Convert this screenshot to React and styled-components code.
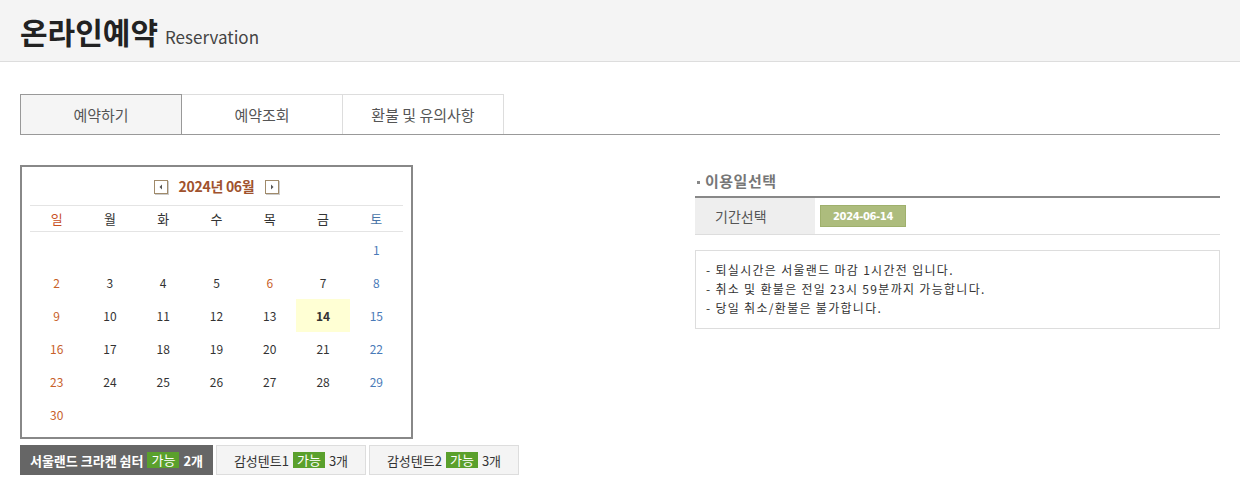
import styled, { createGlobalStyle } from "styled-components";

const GlobalStyle = createGlobalStyle`
  body {
    margin: 0;
    background: #fff;
    font-family: "Noto Sans CJK KR", "Noto Sans", sans-serif;
    color: #333;
  }
`;

const Header = styled.div`
  height: 61px;
  background-color: #f4f4f4;
  border-bottom: 1px solid #ddd;
  display: flex;
  align-items: center;
  padding: 0 20px;
`;

const Title = styled.h1`
  margin: 0;
  font-size: 30px;
  font-weight: bold;
  color: #222;
  line-height: 1;
  display: flex;
  align-items: baseline;
  gap: 7px;
  letter-spacing: 0;
`;

const SubTitle = styled.span`
  font-size: 17px;
  font-weight: normal;
  color: #444;
`;

const TabBar = styled.div`
  display: flex;
  margin: 32px 20px 0;
  border-bottom: 1px solid #999;
`;

const Tab = styled.div`
  box-sizing: border-box;
  width: ${(p) => (p.$first ? 162 : 161)}px;
  height: 40px;
  display: flex;
  align-items: center;
  justify-content: center;
  font-size: 15px;
  color: #555;
  border: 1px solid ${(p) => (p.$active ? "#999" : "#ddd")};
  border-bottom: none;
  border-left: ${(p) => (p.$first ? "1px solid #999" : "none")};
  background-color: ${(p) => (p.$active ? "#f5f5f5" : "#fff")};
`;

const Content = styled.div`
  display: flex;
  justify-content: space-between;
  padding: 30px 20px 0;
`;

const LeftCol = styled.div`
  width: 393px;
`;

const CalendarBox = styled.div`
  border: 2px solid #888;
  padding: 0 8px 6px;
`;

const MonthHead = styled.div`
  height: 38px;
  display: flex;
  align-items: center;
  justify-content: center;
  gap: 11px;
  border-bottom: 1px solid #e4e4e4;
`;

const MonthLabel = styled.span`
  font-size: 14px;
  font-weight: bold;
  color: #a0522d;
  letter-spacing: -0.3px;
`;

const ArrowBtn = styled.span`
  width: 12px;
  height: 12px;
  border: 1px solid #a08a6a;
  box-shadow: 1px 1px 0 #ccc;
  background: #fff;
  display: flex;
  align-items: center;
  justify-content: center;
  margin-top: 2px;
`;

const WeekRow = styled.div`
  display: grid;
  grid-template-columns: repeat(7, 1fr);
  height: 25px;
  border-bottom: 1px solid #e4e4e4;
  align-items: center;
`;

const WeekDay = styled.div`
  text-align: center;
  font-size: 13px;
  color: ${(p) => p.$color || "#333"};
`;

const DayGrid = styled.div`
  display: grid;
  grid-template-columns: repeat(7, 1fr);
  grid-auto-rows: 33px;
  margin-top: 1px;
`;

const Day = styled.div`
  display: flex;
  align-items: center;
  justify-content: center;
  font-size: 12px;
  font-weight: ${(p) => (p.$selected ? "bold" : "normal")};
  color: ${(p) => p.$color || "#333"};
  background-color: ${(p) => (p.$selected ? "#ffffd4" : "transparent")};
`;

const SiteRow = styled.div`
  display: flex;
  gap: 3px;
  margin-top: 6px;
  width: 560px;
`;

const SiteButton = styled.div`
  height: 30px;
  box-sizing: border-box;
  display: flex;
  align-items: center;
  justify-content: center;
  gap: 4px;
  font-size: 13px;
  white-space: nowrap;
  width: ${(p) => p.$width}px;
  color: ${(p) => (p.$active ? "#fff" : "#333")};
  font-weight: ${(p) => (p.$active ? "bold" : "normal")};
  background-color: ${(p) => (p.$active ? "#666" : "#f4f4f4")};
  border: 1px solid ${(p) => (p.$active ? "#666" : "#ddd")};
`;

const Avail = styled.span`
  background-color: #5aa02c;
  color: #fff;
  font-weight: normal;
  padding: 0 4px;
  line-height: 16px;
`;

const RightCol = styled.div`
  width: 525px;
`;

const SectionTitle = styled.div`
  display: flex;
  align-items: center;
  gap: 5px;
  padding-left: 2px;
  height: 31px;
  font-size: 15px;
  font-weight: bold;
  color: #777;
  letter-spacing: 0.5px;
  border-bottom: 2px solid #888;
`;

const Bullet = styled.span`
  width: 3px;
  height: 3px;
  background: #888;
  margin-top: 3px;
`;

const InfoRow = styled.div`
  display: flex;
  height: 36px;
  border-bottom: 1px solid #ddd;
`;

const InfoLabel = styled.div`
  width: 100px;
  padding-left: 20px;
  background-color: #eee;
  display: flex;
  align-items: center;
  font-size: 14px;
  color: #555;
`;

const InfoValue = styled.div`
  display: flex;
  align-items: center;
  padding-left: 5px;
`;

const DateBadge = styled.span`
  width: 84px;
  height: 20px;
  display: flex;
  align-items: center;
  justify-content: center;
  background-color: #adbc7d;
  border: 1px solid #9fb06c;
  color: #fff;
  font-family: "DejaVu Sans", sans-serif;
  font-size: 10px;
  font-weight: bold;
  letter-spacing: -0.4px;
`;

const NoticeBox = styled.div`
  margin-top: 15px;
  border: 1px solid #ddd;
  padding: 9px 10px 11px;
  font-size: 12px;
  letter-spacing: 1.3px;
  line-height: 19px;
  color: #333;
`;

const Triangle = ({ dir }) => (
  <svg width="6" height="6" viewBox="0 0 6 6">
    {dir === "left" ? (
      <polygon points="4,0.5 1.5,3 4,5.5" fill="#555" />
    ) : (
      <polygon points="2,0.5 4.5,3 2,5.5" fill="#555" />
    )}
  </svg>
);

const weekdays = [
  { label: "일", color: "#c8501e" },
  { label: "월" },
  { label: "화" },
  { label: "수" },
  { label: "목" },
  { label: "금" },
  { label: "토", color: "#4a76a8" },
];

const dayColor = (d, col) => {
  if (col === 0 || d === 6) return "#c8612a";
  if (col === 6) return "#4a7ab8";
  return "#333";
};

const App = () => {
  const cells = [];
  for (let i = 0; i < 6; i++) cells.push(null);
  for (let d = 1; d <= 30; d++) cells.push(d);

  return (
    <>
      <GlobalStyle />
      <Header>
        <Title>
          온라인예약<SubTitle>Reservation</SubTitle>
        </Title>
      </Header>

      <TabBar>
        <Tab $active $first>예약하기</Tab>
        <Tab>예약조회</Tab>
        <Tab>환불 및 유의사항</Tab>
      </TabBar>

      <Content>
        <LeftCol>
          <CalendarBox>
            <MonthHead>
              <ArrowBtn>
                <Triangle dir="left" />
              </ArrowBtn>
              <MonthLabel>2024년 06월</MonthLabel>
              <ArrowBtn>
                <Triangle dir="right" />
              </ArrowBtn>
            </MonthHead>
            <WeekRow>
              {weekdays.map((w) => (
                <WeekDay key={w.label} $color={w.color}>
                  {w.label}
                </WeekDay>
              ))}
            </WeekRow>
            <DayGrid>
              {cells.map((d, i) => (
                <Day
                  key={i}
                  $color={d ? dayColor(d, i % 7) : undefined}
                  $selected={d === 14}
                >
                  {d}
                </Day>
              ))}
            </DayGrid>
          </CalendarBox>
          <SiteRow>
            <SiteButton $active $width={193}>
              서울랜드 크라켄 쉼터 <Avail>가능</Avail> 2개
            </SiteButton>
            <SiteButton $width={150}>
              감성텐트1 <Avail>가능</Avail> 3개
            </SiteButton>
            <SiteButton $width={150}>
              감성텐트2 <Avail>가능</Avail> 3개
            </SiteButton>
          </SiteRow>
        </LeftCol>

        <RightCol>
          <SectionTitle>
            <Bullet />
            이용일선택
          </SectionTitle>
          <InfoRow>
            <InfoLabel>기간선택</InfoLabel>
            <InfoValue>
              <DateBadge>2024-06-14</DateBadge>
            </InfoValue>
          </InfoRow>
          <NoticeBox>
            <div>- 퇴실시간은 서울랜드 마감 1시간전 입니다.</div>
            <div>- 취소 및 환불은 전일 23시 59분까지 가능합니다.</div>
            <div>- 당일 취소/환불은 불가합니다.</div>
          </NoticeBox>
        </RightCol>
      </Content>
    </>
  );
};

export default App;
